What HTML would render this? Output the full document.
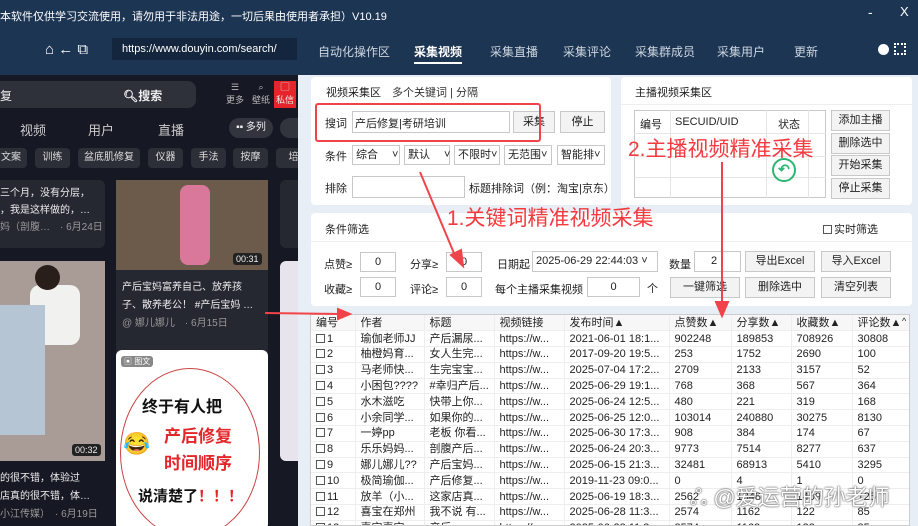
<!DOCTYPE html>
<html><head><meta charset="utf-8"><style>
*{margin:0;padding:0;box-sizing:border-box}
body{width:918px;height:526px;overflow:hidden;position:relative;background:#e8eef6;font-family:"Liberation Sans","Noto Sans CJK SC",sans-serif;font-size:11px;color:#222}
.a{position:absolute;white-space:nowrap}
.top{left:0;top:0;width:918px;height:75px;background:#1c3553;color:#fff}
.pn{background:#fff;border-radius:4px}
.in{background:#fff;border:1px solid #c8c8c8}
.bt{background:#f3f3f3;border:1px solid #c8c8c8;text-align:center;line-height:18px;font-size:11px}
.sel{background:#fff;border:1px solid #c8c8c8;font-size:11px;padding-left:3px;line-height:18px}
.red{color:#f23a3f;font-size:21px}
.chip{background:#2d2f38;color:#ddd;border-radius:4px;height:20px;line-height:20px;text-align:center;font-size:10px;top:148px}
table{border-collapse:collapse}
td{height:15.8px;line-height:14px;font-size:11px;padding:0 0 0 5px;border-right:1px solid #eee;border-bottom:1px solid #eee;white-space:nowrap;overflow:hidden}
.cb{display:inline-block;width:9px;height:9px;border:1px solid #555;margin-right:2px;vertical-align:-1px}
</style></head><body>
<div class="a top">
 <div class="a" style="left:0;top:8px;font-size:11px">本软件仅供学习交流使用，请勿用于非法用途，一切后果由使用者承担）V10.19</div>
 <div class="a" style="left:868px;top:4px;font-size:14px">-</div>
 <div class="a" style="left:900px;top:4px;font-size:13px">X</div>
 <div class="a" style="left:45px;top:41px;font-size:15px">⌂ ← ⧉</div>
 <div class="a" style="left:112px;top:38px;width:185px;height:22px;background:#14263d;font-size:11px;line-height:22px;padding-left:10px">https://www.douyin.com/search/</div>
 <div class="a" style="left:318px;top:43px;font-size:12px;color:#cdd6e0">自动化操作区</div>
 <div class="a" style="left:414px;top:43px;font-size:12px;font-weight:bold">采集视频</div>
 <div class="a" style="left:414px;top:62px;width:48px;height:2px;background:#fff"></div>
 <div class="a" style="left:490px;top:43px;font-size:12px;color:#cdd6e0">采集直播</div>
 <div class="a" style="left:563px;top:43px;font-size:12px;color:#cdd6e0">采集评论</div>
 <div class="a" style="left:635px;top:43px;font-size:12px;color:#cdd6e0">采集群成员</div>
 <div class="a" style="left:717px;top:43px;font-size:12px;color:#cdd6e0">采集用户</div>
 <div class="a" style="left:794px;top:43px;font-size:12px;color:#cdd6e0">更新</div>
 <div class="a" style="left:878px;top:44px;width:11px;height:11px;border-radius:50%;background:#fff"></div>
 <div class="a" style="left:894px;top:43px;width:12px;height:12px;border:2px dotted #fff"></div>
</div>
<!-- left dark panel -->
<div class="a" style="left:0;top:75px;width:298px;height:451px;background:#161823;overflow:hidden;color:#eee">
 <div class="a" style="left:-10px;top:6px;width:206px;height:27px;border-radius:8px;background:#2f313a"></div>
 <div class="a" style="left:0;top:12px;font-size:12px">复</div>
 <div class="a" style="left:123px;top:12px;font-size:12px;font-weight:bold">🔍︎搜索</div>
 <div class="a" style="left:226px;top:6px;font-size:9px;text-align:center;color:#bbb;line-height:13px">☰<br>更多</div>
 <div class="a" style="left:252px;top:6px;font-size:9px;text-align:center;color:#bbb;line-height:13px">⌕<br>壁纸</div>
 <div class="a" style="left:274px;top:6px;width:22px;height:27px;background:#e5242b;font-size:9px;text-align:center;line-height:13px">▢<br>私信</div>
 <div class="a" style="left:20px;top:45px;font-size:13px;color:#ccc">视频</div>
 <div class="a" style="left:88px;top:45px;font-size:13px;color:#ccc">用户</div>
 <div class="a" style="left:158px;top:45px;font-size:13px;color:#ccc">直播</div>
 <div class="a" style="left:229px;top:43px;width:44px;height:20px;border-radius:10px;background:#33353e;font-size:10px;line-height:20px;text-align:center">▪▪ 多列</div>
 <div class="a" style="left:280px;top:43px;width:30px;height:20px;border-radius:10px;background:#33353e"></div>
 <div class="a chip" style="left:-5px;top:73px;width:32px">文案</div>
 <div class="a chip" style="left:35px;top:73px;width:35px">训练</div>
 <div class="a chip" style="left:78px;top:73px;width:62px">盆底肌修复</div>
 <div class="a chip" style="left:148px;top:73px;width:35px">仪器</div>
 <div class="a chip" style="left:191px;top:73px;width:35px">手法</div>
 <div class="a chip" style="left:233px;top:73px;width:35px">按摩</div>
 <div class="a chip" style="left:276px;top:73px;width:35px">培</div>
 <div class="a" style="left:-5px;top:105px;width:110px;height:68px;background:#252731;border-radius:6px"></div>
 <div class="a" style="left:0;top:110px;font-size:10px;line-height:17px">三个月，没有分层，<br>，我是这样做的，…<br><span style="color:#999">妈（剖腹…　· 6月24日</span></div>
 <div class="a" style="left:116px;top:105px;width:152px;height:212px;background:#252731;border-radius:6px"></div>
 <div class="a" style="left:116px;top:105px;width:152px;height:90px;background:#6c5a4a"></div>
 <div class="a" style="left:180px;top:110px;width:30px;height:80px;background:#d9789a;border-radius:8px"></div>
 <div class="a" style="left:233px;top:178px;font-size:9px;background:#222;padding:1px 3px;border-radius:3px">00:31</div>
 <div class="a" style="left:122px;top:204px;font-size:10px;line-height:18px">产后宝妈富养自己、放养孩<br>子、散养老公！ #产后宝妈 …<br><span style="color:#999">@ 娜儿娜儿　· 6月15日</span></div>
 <div class="a" style="left:0;top:186px;width:105px;height:200px;background:#a99b96"></div>
 <div class="a" style="left:30px;top:210px;width:50px;height:60px;background:#f1f1ef;border-radius:10px"></div>
 <div class="a" style="left:35px;top:190px;width:25px;height:25px;background:#2a1e1a;border-radius:50%"></div>
 <div class="a" style="left:0;top:230px;width:45px;height:130px;background:#b5c5d4"></div>
 <div class="a" style="left:72px;top:369px;font-size:9px;background:#222;padding:1px 3px;border-radius:3px">00:32</div>
 <div class="a" style="left:0;top:395px;font-size:10px;line-height:18px">的很不错，体验过<br>店真的很不错，体…<br><span style="color:#999">小江传媒）　· 6月19日</span></div>
 <div class="a" style="left:116px;top:275px;width:152px;height:180px;background:#fff;border-radius:6px"></div>
 <div class="a" style="left:121px;top:281px;font-size:8px;background:#888;color:#fff;padding:0 3px;border-radius:3px">▣ 图文</div>
 <div class="a" style="left:120px;top:293px;width:140px;height:170px;border:1.5px solid #c44;border-radius:50%"></div>
 <div class="a" style="left:142px;top:318px;font-size:16px;color:#111;font-weight:bold">终于有人把</div>
 <div class="a" style="left:123px;top:356px;font-size:22px">😂</div>
 <div class="a" style="left:164px;top:348px;font-size:17px;color:#e3262a;font-weight:bold;line-height:27px">产后修复<br>时间顺序</div>
 <div class="a" style="left:138px;top:410px;font-size:15px;color:#111;font-weight:bold">说清楚了<span style="color:#e3262a">！！！</span></div>
 <div class="a" style="left:280px;top:105px;width:30px;height:68px;background:#252731;border-radius:6px"></div>
 <div class="a" style="left:280px;top:186px;width:30px;height:200px;background:#e8e4ee;border-radius:6px"></div>
</div>
<!-- video panel -->
<div class="a pn" style="left:311px;top:77px;width:300px;height:128px"></div>
<div class="a" style="left:326px;top:84px">视频采集区　<span style="color:#333">多个关键词 | 分隔</span></div>
<div class="a" style="left:325px;top:115px">搜词</div>
<div class="a in" style="left:352px;top:111px;width:158px;height:22px;padding:3px 2px">产后修复|考研培训</div>
<div class="a bt" style="left:513px;top:111px;width:42px;height:22px;line-height:20px">采集</div>
<div class="a bt" style="left:560px;top:111px;width:45px;height:22px;line-height:20px">停止</div>
<div class="a" style="left:315px;top:103px;width:226px;height:39px;border:2.5px solid #f0444a;border-radius:3px"></div>
<div class="a" style="left:325px;top:148px">条件</div>
<div class="a sel" style="left:352px;top:145px;width:48px;height:20px">综合　 ˅</div>
<div class="a sel" style="left:404px;top:145px;width:46px;height:20px">默认　 ˅</div>
<div class="a sel" style="left:454px;top:145px;width:46px;height:20px">不限时˅</div>
<div class="a sel" style="left:504px;top:145px;width:48px;height:20px">无范围˅</div>
<div class="a sel" style="left:557px;top:145px;width:48px;height:20px">智能排˅</div>
<div class="a" style="left:325px;top:180px">排除</div>
<div class="a in" style="left:352px;top:176px;width:113px;height:22px"></div>
<div class="a" style="left:469px;top:180px">标题排除词（例：淘宝|京东）</div>
<!-- anchor panel -->
<div class="a pn" style="left:621px;top:77px;width:291px;height:128px"></div>
<div class="a" style="left:635px;top:84px">主播视频采集区</div>
<div class="a" style="left:621px;top:104px;width:291px;height:1px;background:#eee"></div>
<div class="a in" style="left:634px;top:110px;width:192px;height:88px"></div>
<div class="a" style="left:634px;top:133px;width:192px;height:1px;background:#e5e5e5"></div>
<div class="a" style="left:634px;top:156px;width:192px;height:1px;background:#e5e5e5"></div>
<div class="a" style="left:634px;top:177px;width:192px;height:1px;background:#e5e5e5"></div>
<div class="a" style="left:670px;top:110px;width:1px;height:88px;background:#e5e5e5"></div>
<div class="a" style="left:766px;top:110px;width:1px;height:88px;background:#e5e5e5"></div>
<div class="a" style="left:808px;top:110px;width:1px;height:88px;background:#e5e5e5"></div>
<div class="a" style="left:640px;top:116px">编号</div>
<div class="a" style="left:675px;top:116px">SECUID/UID</div>
<div class="a" style="left:778px;top:116px">状态</div>
<div class="a" style="left:772px;top:158px;width:24px;height:24px;border-radius:50%;border:2px solid #2bb673;color:#2bb673;font-size:14px;line-height:19px;text-align:center;font-weight:bold">↶</div>
<div class="a bt" style="left:831px;top:110px;width:59px;height:21px">添加主播</div>
<div class="a bt" style="left:831px;top:133px;width:59px;height:21px">删除选中</div>
<div class="a bt" style="left:831px;top:155px;width:59px;height:21px">开始采集</div>
<div class="a bt" style="left:831px;top:178px;width:59px;height:21px">停止采集</div>
<!-- filter panel -->
<div class="a pn" style="left:311px;top:213px;width:601px;height:93px"></div>
<div class="a" style="left:325px;top:221px">条件筛选</div>
<div class="a" style="left:823px;top:221px"><span class="cb"></span>实时筛选</div>
<div class="a" style="left:311px;top:241px;width:601px;height:1px;background:#eee"></div>
<div class="a" style="left:324px;top:256px">点赞≥</div>
<div class="a in" style="left:360px;top:252px;width:36px;height:20px;text-align:center;line-height:18px">0</div>
<div class="a" style="left:410px;top:256px">分享≥</div>
<div class="a in" style="left:446px;top:252px;width:36px;height:20px;text-align:center;line-height:18px">0</div>
<div class="a" style="left:497px;top:256px">日期起</div>
<div class="a in" style="left:532px;top:251px;width:126px;height:21px;line-height:19px;padding-left:3px">2025-06-29 22:44:03 ˅</div>
<div class="a" style="left:669px;top:256px">数量</div>
<div class="a in" style="left:694px;top:251px;width:47px;height:21px;line-height:19px;padding-left:16px">2</div>
<div class="a bt" style="left:745px;top:251px;width:70px;height:21px">导出Excel</div>
<div class="a bt" style="left:821px;top:251px;width:70px;height:21px">导入Excel</div>
<div class="a" style="left:324px;top:281px">收藏≥</div>
<div class="a in" style="left:360px;top:277px;width:36px;height:20px;text-align:center;line-height:18px">0</div>
<div class="a" style="left:410px;top:281px">评论≥</div>
<div class="a in" style="left:446px;top:277px;width:36px;height:20px;text-align:center;line-height:18px">0</div>
<div class="a" style="left:495px;top:281px">每个主播采集视频</div>
<div class="a in" style="left:587px;top:277px;width:53px;height:20px;text-align:center;line-height:18px">0</div>
<div class="a" style="left:647px;top:280px">个</div>
<div class="a bt" style="left:670px;top:277px;width:70px;height:21px">一键筛选</div>
<div class="a bt" style="left:745px;top:277px;width:70px;height:21px">删除选中</div>
<div class="a bt" style="left:821px;top:277px;width:70px;height:21px">清空列表</div>
<!-- table -->
<div class="a" style="left:310px;top:314px;width:600px;height:212px;background:#fff;border:1px solid #ccc;overflow:hidden">
<table style="width:640px">
<tr style="background:#f7f7f7"><td style="width:44px">编号</td><td style="width:69px">作者</td><td style="width:70px">标题</td><td style="width:70px">视频链接</td><td style="width:105px">发布时间▲</td><td style="width:62px">点赞数▲</td><td style="width:60px">分享数▲</td><td style="width:61px">收藏数▲</td><td>评论数▲</td></tr>
<tr><td><span class="cb"></span>1</td><td>瑜伽老师JJ</td><td>产后漏尿...</td><td>https://w...</td><td>2021-06-01 18:1...</td><td>902248</td><td>189853</td><td>708926</td><td>30808</td></tr>
<tr><td><span class="cb"></span>2</td><td>柚橙妈育...</td><td>女人生完...</td><td>https://w...</td><td>2017-09-20 19:5...</td><td>253</td><td>1752</td><td>2690</td><td>100</td></tr>
<tr><td><span class="cb"></span>3</td><td>马老师快...</td><td>生完宝宝...</td><td>https://w...</td><td>2025-07-04 17:2...</td><td>2709</td><td>2133</td><td>3157</td><td>52</td></tr>
<tr><td><span class="cb"></span>4</td><td>小困包????</td><td>#幸归产后...</td><td>https://w...</td><td>2025-06-29 19:1...</td><td>768</td><td>368</td><td>567</td><td>364</td></tr>
<tr><td><span class="cb"></span>5</td><td>水木滋吃</td><td>快带上你...</td><td>https://w...</td><td>2025-06-24 12:5...</td><td>480</td><td>221</td><td>319</td><td>168</td></tr>
<tr><td><span class="cb"></span>6</td><td>小余同学...</td><td>如果你的...</td><td>https://w...</td><td>2025-06-25 12:0...</td><td>103014</td><td>240880</td><td>30275</td><td>8130</td></tr>
<tr><td><span class="cb"></span>7</td><td>一婷pp</td><td>老板 你看...</td><td>https://w...</td><td>2025-06-30 17:3...</td><td>908</td><td>384</td><td>174</td><td>67</td></tr>
<tr><td><span class="cb"></span>8</td><td>乐乐妈妈...</td><td>剖腹产后...</td><td>https://w...</td><td>2025-06-24 20:3...</td><td>9773</td><td>7514</td><td>8277</td><td>637</td></tr>
<tr><td><span class="cb"></span>9</td><td>娜儿娜儿??</td><td>产后宝妈...</td><td>https://w...</td><td>2025-06-15 21:3...</td><td>32481</td><td>68913</td><td>5410</td><td>3295</td></tr>
<tr><td><span class="cb"></span>10</td><td>极简瑜伽...</td><td>产后修复...</td><td>https://w...</td><td>2019-11-23 09:0...</td><td>0</td><td>4</td><td>1</td><td>0</td></tr>
<tr><td><span class="cb"></span>11</td><td>放羊（小...</td><td>这家店真...</td><td>https://w...</td><td>2025-06-19 18:3...</td><td>2562</td><td>1348</td><td>1409</td><td>125</td></tr>
<tr><td><span class="cb"></span>12</td><td>喜宝在郑州</td><td>我不说 有...</td><td>https://w...</td><td>2025-06-28 11:3...</td><td>2574</td><td>1162</td><td>122</td><td>85</td></tr>
<tr><td><span class="cb"></span>13</td><td>喜宝喜宝</td><td>产后...</td><td>https://w...</td><td>2025-06-28 11:3...</td><td>2574</td><td>1162</td><td>122</td><td>85</td></tr>
</table></div>
<div class="a" style="left:902px;top:316px;font-size:9px">^</div>
<!-- annotations -->
<div class="a red" style="left:447px;top:202px">1.关键词精准视频采集</div>
<div class="a red" style="left:628px;top:133px">2.主播视频精准采集</div>
<svg class="a" style="left:0;top:0" width="918" height="526">
<g stroke="#f0444a" stroke-width="2" fill="#f0444a">
<line x1="420" y1="172" x2="456" y2="258"/><polygon points="451,255 463,266 461,250"/>
<line x1="722" y1="162" x2="722" y2="304"/><polygon points="716,302 728,302 722,316"/>
<line x1="265" y1="313" x2="340" y2="314"/><polygon points="338,309 350,314 338,319"/>
</g></svg>
<div class="a" style="left:690px;top:480px;font-size:22px;color:#fff;text-shadow:0 0 2px #555,0 0 1px #333">ஃ @爱运营的孙老师</div>
</body></html>
